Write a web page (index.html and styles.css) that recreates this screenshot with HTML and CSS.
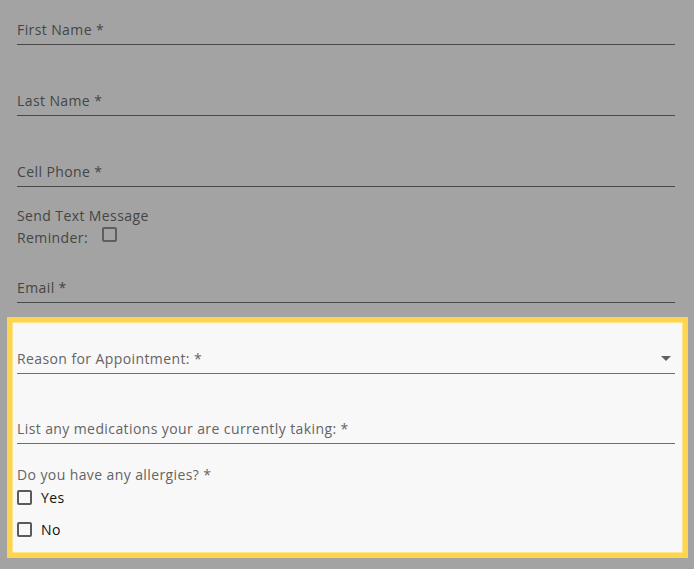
FILE: index.html
```html
<!DOCTYPE html>
<html lang="en">
<head>
<meta charset="utf-8">
<title>Appointment form</title>
<link rel="stylesheet" href="styles.css">
</head>
<body>
<div class="page">
  <form class="form">
    <div class="field first"><span class="label">First Name *</span></div>
    <div class="field"><span class="label">Last Name *</span></div>
    <div class="field"><span class="label">Cell Phone *</span></div>
    <div class="reminder">
      <div>Send Text Message</div>
      <div class="reminder-row">Reminder: <span class="check dim"></span></div>
    </div>
    <div class="field email"><span class="label">Email *</span></div>

    <div class="highlight">
      <div class="field select">
        <span class="label">Reason for Appointment: *</span>
        <span class="arrow"></span>
      </div>
      <div class="field meds"><span class="label">List any medications your are currently taking: *</span></div>
      <div class="group">
        <div class="group-label">Do you have any allergies? *</div>
        <label class="option"><span class="check"></span><span>Yes</span></label>
        <label class="option"><span class="check"></span><span>No</span></label>
      </div>
    </div>
  </form>
</div>
</body>
</html>
```
FILE: styles.css
```css
html, body {
  margin: 0;
  padding: 0;
}
body {
  background: #a3a3a3;
  font-family: "Open Sans", "Noto Sans", sans-serif;
  font-size: 14px;
  letter-spacing: 0.4px;
  color: #454545;
  width: 694px;
  height: 569px;
  overflow: hidden;
}
.page {
  padding: 0 19px 0 17px;
}
.form {
  display: flex;
  flex-direction: column;
}
.field {
  position: relative;
  height: 45px;
  box-sizing: border-box;
  border-bottom: 1px solid #4a4a4a;
  display: flex;
  align-items: flex-end;
  padding-bottom: 4px;
  line-height: 20px;
}
.field + .field {
  margin-top: 26px;
}
.reminder {
  margin-top: 18px;
  line-height: 22px;
  height: 44px;
}
.reminder-row {
  display: flex;
  align-items: center;
}
.field.email {
  margin-top: 9px;
}
.check {
  display: inline-block;
  width: 15px;
  height: 15px;
  box-sizing: border-box;
  border: 2px solid #505050;
  border-radius: 2px;
  background: transparent;
}
.check.dim {
  border-color: #5e5e5e;
  margin-left: 14px;
  margin-top: -7px;
}
.highlight {
  margin: 14px -13px 0 -10px;
  padding: 0 8px 0 5px;
  background: #f8f8f8;
  border: 5px solid #ffd54f;
  box-shadow: inset 0 0 0 1px #ffe58a;
  color: #646464;
}
.highlight .field {
  border-bottom-color: #6e6e6e;
}
.highlight .field.select {
  height: 52px;
  margin-top: 0;
}
.highlight .field.meds {
  margin-top: 25px;
}
.arrow {
  position: absolute;
  right: 4px;
  bottom: 12px;
  width: 0;
  height: 0;
  border-left: 5px solid transparent;
  border-right: 5px solid transparent;
  border-top: 5px solid #606060;
}
.group {
  padding-top: 21px;
  padding-bottom: 8px;
}
.group-label {
  line-height: 20px;
}
.option {
  display: flex;
  align-items: center;
  gap: 9px;
  height: 32px;
  color: #111;
  margin-top: -4px;
}
.option + .option {
  margin-top: 0;
}
.option .check {
  border-color: #5a5a5a;
}
```
